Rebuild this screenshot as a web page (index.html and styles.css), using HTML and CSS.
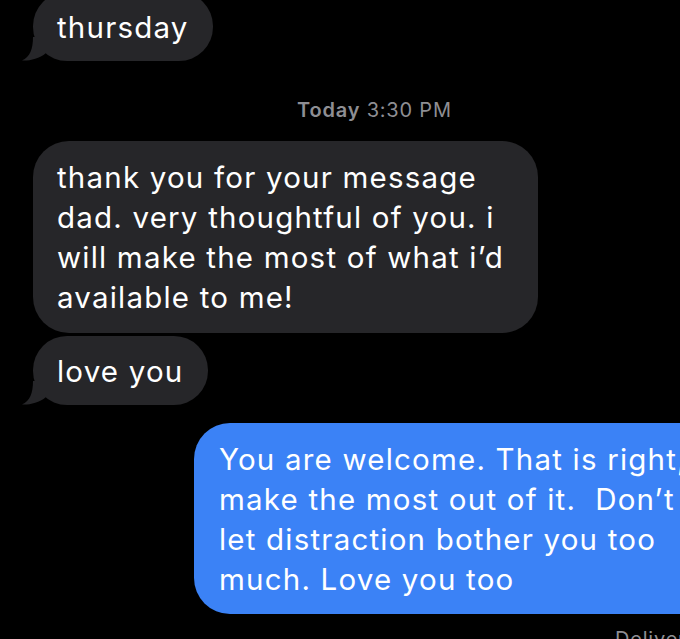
FILE: index.html
```html
<!DOCTYPE html>
<html>
<head>
<meta charset="utf-8">
<link rel="stylesheet" href="styles.css">
</head>
<body>
<div class="thread">
  <div class="bubble in first">thursday<svg class="tail" viewBox="0 0 30 24" width="30" height="24"><path d="M12 0 C12 12 9 20 1 23.5 C8 24 18 22 25 16 L25 0 Z"/></svg></div>
  <div class="stamp"><b>Today</b> 3:30 PM</div>
  <div class="bubble in big">thank you for your message<br>dad. very thoughtful of you. i<br>will make the most of what i’d<br>available to me!</div>
  <div class="bubble in love">love you<svg class="tail" viewBox="0 0 30 24" width="30" height="24"><path d="M12 0 C12 12 9 20 1 23.5 C8 24 18 22 25 16 L25 0 Z"/></svg></div>
  <div class="bubble out">You are welcome. That is right,<br>make the most out of it.&nbsp; Don’t<br>let distraction bother you too<br>much. Love you too</div>
  <div class="status">Delivered</div>
</div>
</body>
</html>
```
FILE: styles.css
```css
html, body {
  margin: 0;
  padding: 0;
  background: #000;
  overflow: hidden;
  width: 680px;
  height: 639px;
}
.thread {
  display: flex;
  flex-direction: column;
  align-items: flex-start;
  font-family: "Inter", "Liberation Sans", sans-serif;
  font-size: 29.5px;
  letter-spacing: 1.2px;
  color: #fff;
}
.bubble {
  position: relative;
  line-height: 40px;
  white-space: nowrap;
  border-radius: 34px;
  padding: 15px 24px 14px 24px;
}
.in {
  background: #262629;
  margin-left: 33px;
}
.first {
  margin-top: -8px;
}
.tail {
  position: absolute;
  left: -12px;
  bottom: 0;
  fill: #262629;
}
.stamp {
  margin: 34px 0 0 297px;
  font-size: 20px;
  letter-spacing: 0.8px;
  line-height: 30px;
  color: #8e8e93;
}
.stamp b {
  font-weight: 600;
}
.big {
  margin-top: 16px;
  padding: 16px 34px 16px 24px;
  border-radius: 36px;
}
.love {
  margin-top: 3px;
}
.out {
  background: #3b82f6;
  margin: 18px 0 0 194px;
  padding: 16px 60px 15px 25px;
  border-radius: 36px;
}
.status {
  margin: 12px 0 0 615px;
  font-size: 20px;
  letter-spacing: 0.8px;
  line-height: 26px;
  color: #8e8e93;
  white-space: nowrap;
}
```
